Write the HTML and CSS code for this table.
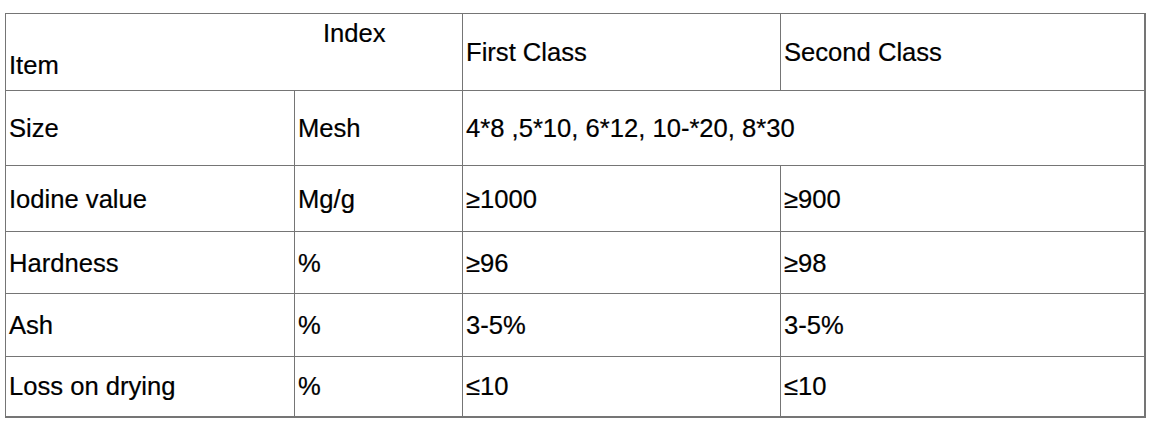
FILE: index.html
```html
<!DOCTYPE html>
<html>
<head>
<meta charset="utf-8">
<link rel="stylesheet" href="styles.css">
</head>
<body>
<table class="spec">
  <colgroup>
    <col class="c1">
    <col class="c2">
    <col class="c3">
    <col class="c4">
  </colgroup>
  <tr class="r1">
    <td colspan="2" class="head-split">
      <div class="idx">Index</div>
      <div class="item">Item</div>
    </td>
    <td>First Class</td>
    <td>Second Class</td>
  </tr>
  <tr class="r2">
    <td>Size</td>
    <td>Mesh</td>
    <td colspan="2">4*8 ,5*10, 6*12, 10-*20, 8*30</td>
  </tr>
  <tr class="r3">
    <td>Iodine value</td>
    <td>Mg/g</td>
    <td>≥1000</td>
    <td>≥900</td>
  </tr>
  <tr class="r4">
    <td>Hardness</td>
    <td>%</td>
    <td>≥96</td>
    <td>≥98</td>
  </tr>
  <tr class="r5">
    <td>Ash</td>
    <td>%</td>
    <td>3-5%</td>
    <td>3-5%</td>
  </tr>
  <tr class="r6">
    <td>Loss on drying</td>
    <td>%</td>
    <td>≤10</td>
    <td>≤10</td>
  </tr>
</table>
</body>
</html>
```

FILE: styles.css
```css
html, body {
  margin: 0;
  padding: 0;
  background: #fff;
}

body {
  padding: 13px 0 0 5px;
  font-family: "Liberation Sans", Arial, sans-serif;
  font-size: 25.6px;
  color: #000;
  -webkit-text-stroke: 0.2px #000;
}

.spec {
  border-collapse: collapse;
  table-layout: fixed;
  width: 1139px;
  border-top: 1px solid #757575;
  border-left: 1px solid #757575;
  border-right: 2px solid #757575;
  border-bottom: 2px solid #757575;
}

.c1 { width: 289px; }
.c2 { width: 168px; }
.c3 { width: 318px; }
.c4 { width: 364px; }

.spec td {
  border: 1px solid #757575;
  padding: 0 3px;
  vertical-align: middle;
  line-height: 28px;
  white-space: nowrap;
}

.r1 { height: 77px; }
.r2 { height: 75px; }
.r3 { height: 66px; }
.r4 { height: 62px; }
.r5 { height: 63px; }
.r6 { height: 60px; }

.spec td.head-split {
  line-height: 32px;
  padding-bottom: 6px;
}

.idx {
  padding-left: 314px;
}
```
